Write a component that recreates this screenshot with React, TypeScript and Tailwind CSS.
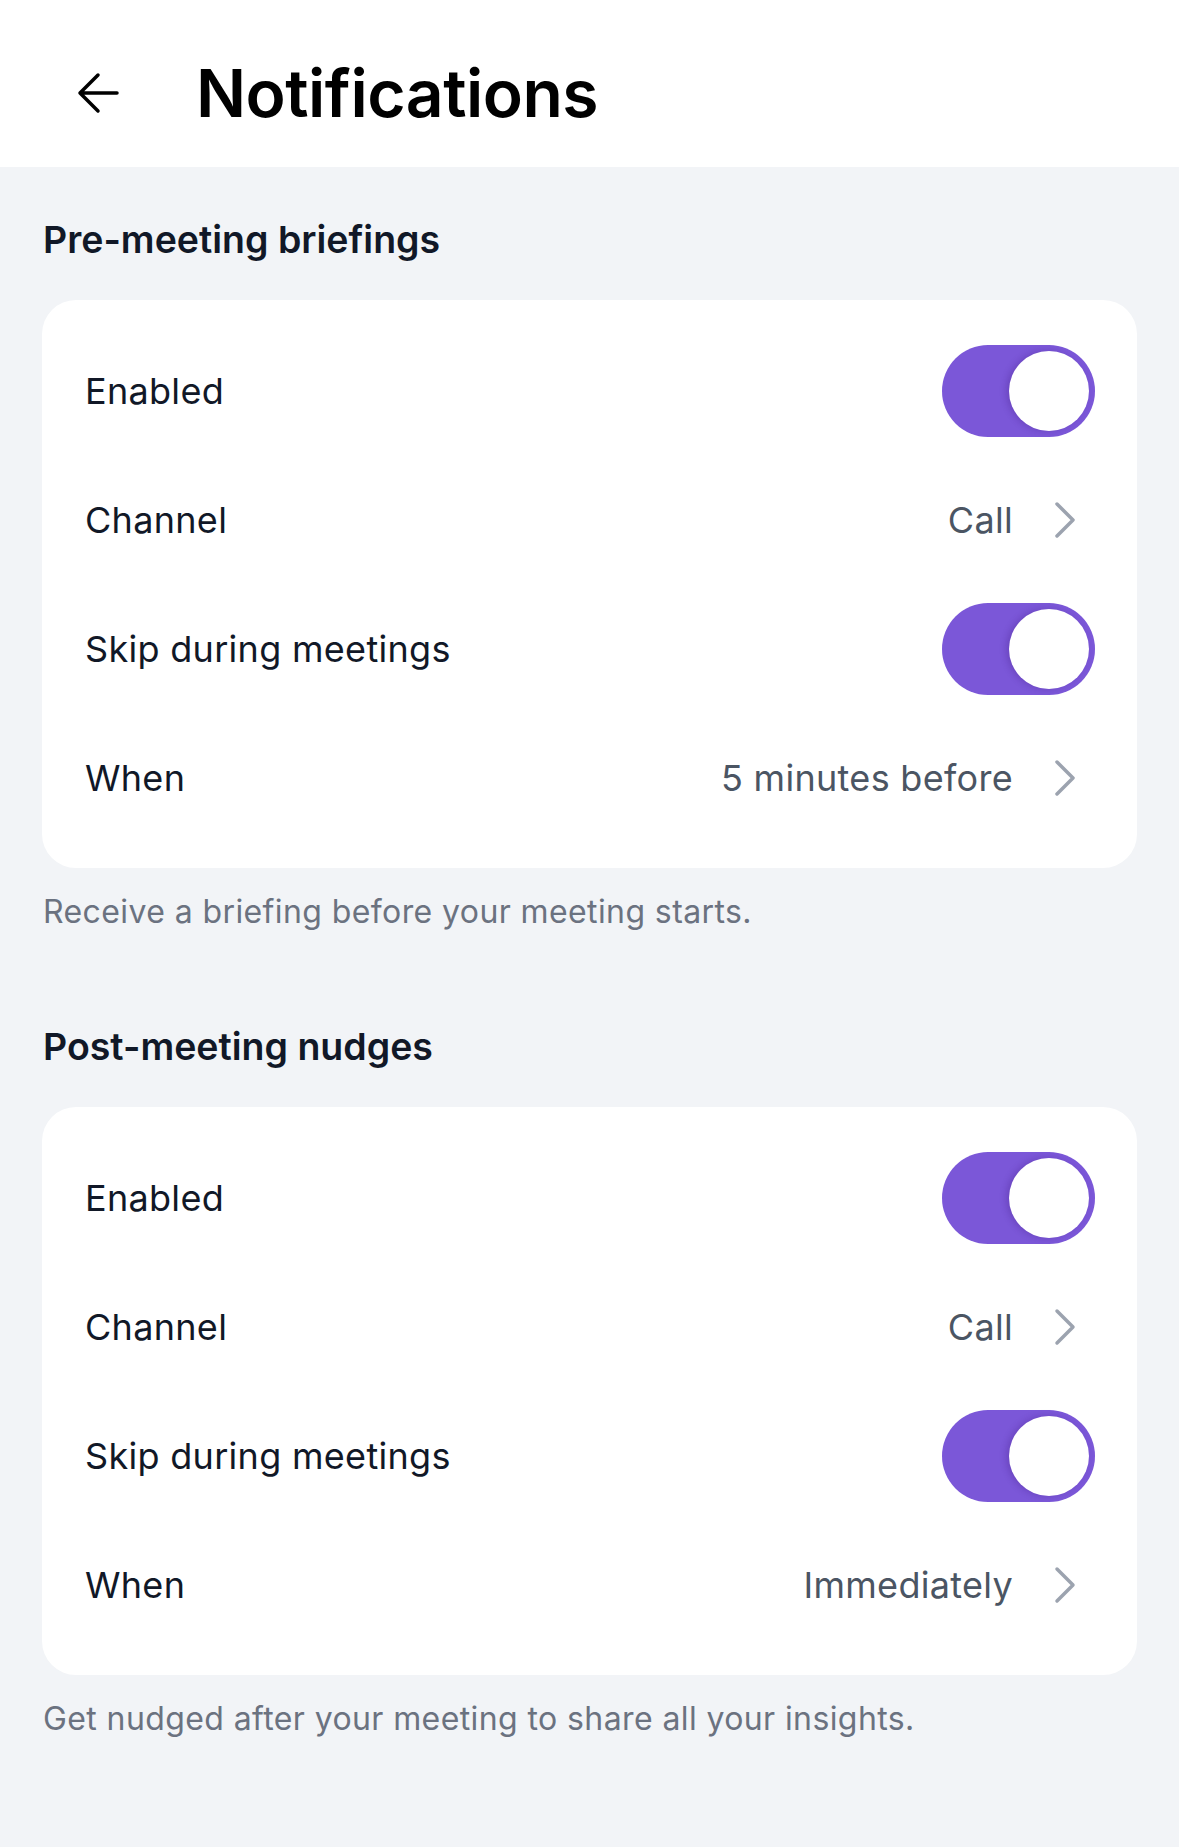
import React from 'react';

type Row =
  | { label: string; kind: 'toggle'; on: boolean }
  | { label: string; kind: 'link'; value: string };

const Toggle: React.FC<{ on: boolean }> = ({ on }) => (
  <div
    className={`relative h-[92px] w-[153px] shrink-0 rounded-full ${on ? 'bg-[#7b57d8]' : 'bg-gray-300'}`}
  >
    <div
      className={`absolute top-[6px] h-[80px] w-[80px] rounded-full bg-white shadow-[-3px_0_6px_rgba(60,20,120,0.25)] ${on ? 'right-[6px]' : 'left-[6px]'}`}
    />
  </div>
);

const Chevron: React.FC = () => (
  <svg width="24" height="40" viewBox="0 0 24 40" fill="none" className="mr-[18px] shrink-0">
    <path d="M4 4 L20 20 L4 36" stroke="#9ca3af" strokeWidth="3.5" strokeLinecap="round" strokeLinejoin="round" />
  </svg>
);

const Section: React.FC<{ title: string; rows: Row[]; note: string; first?: boolean }> = ({ title, rows, note, first }) => (
  <section className={first ? 'pt-[51px]' : 'pt-[93px]'}>
    <h2 className="px-[43px] text-[37.5px] leading-[44px] font-semibold text-[#111827]">{title}</h2>
    <div className="mx-[42px] mt-[38px] rounded-[34px] bg-white py-[26px] pl-[43px] pr-[42px]">
      {rows.map((row, i) => (
        <div key={i} className="flex h-[129px] items-center justify-between">
          <span className="text-[36px] tracking-[0.3px] text-[#111827]">{row.label}</span>
          {row.kind === 'toggle' ? (
            <Toggle on={row.on} />
          ) : (
            <div className="flex items-center gap-[40px]">
              <span className="text-[36px] tracking-[0.3px] text-[#4b5563]">{row.value}</span>
              <Chevron />
            </div>
          )}
        </div>
      ))}
    </div>
    <p className="mt-[24px] px-[43px] text-[32px] leading-[40px] tracking-[0.4px] text-[#6b7280]">{note}</p>
  </section>
);

export default function App() {
  const pre: Row[] = [
    { label: 'Enabled', kind: 'toggle', on: true },
    { label: 'Channel', kind: 'link', value: 'Call' },
    { label: 'Skip during meetings', kind: 'toggle', on: true },
    { label: 'When', kind: 'link', value: '5 minutes before' },
  ];
  const post: Row[] = [
    { label: 'Enabled', kind: 'toggle', on: true },
    { label: 'Channel', kind: 'link', value: 'Call' },
    { label: 'Skip during meetings', kind: 'toggle', on: true },
    { label: 'When', kind: 'link', value: 'Immediately' },
  ];

  return (
    <div className="min-h-screen bg-[#f2f4f7] font-['Inter',sans-serif]">
      {/* Header */}
      <div className="flex h-[167px] items-center bg-white pl-[77px] pt-[18px]">
        <svg width="42" height="42" viewBox="0 0 42 42" fill="none">
          <path d="M40 21 H3 M21 3 L3 21 L21 39" stroke="#000" strokeWidth="3.5" strokeLinecap="round" strokeLinejoin="round" />
        </svg>
        <h1 className="ml-[77px] text-[66px] leading-none font-semibold tracking-[-0.5px] text-black">Notifications</h1>
      </div>

      <Section first title="Pre-meeting briefings" rows={pre} note="Receive a briefing before your meeting starts." />
      <Section title="Post-meeting nudges" rows={post} note="Get nudged after your meeting to share all your insights." />
    </div>
  );
}
